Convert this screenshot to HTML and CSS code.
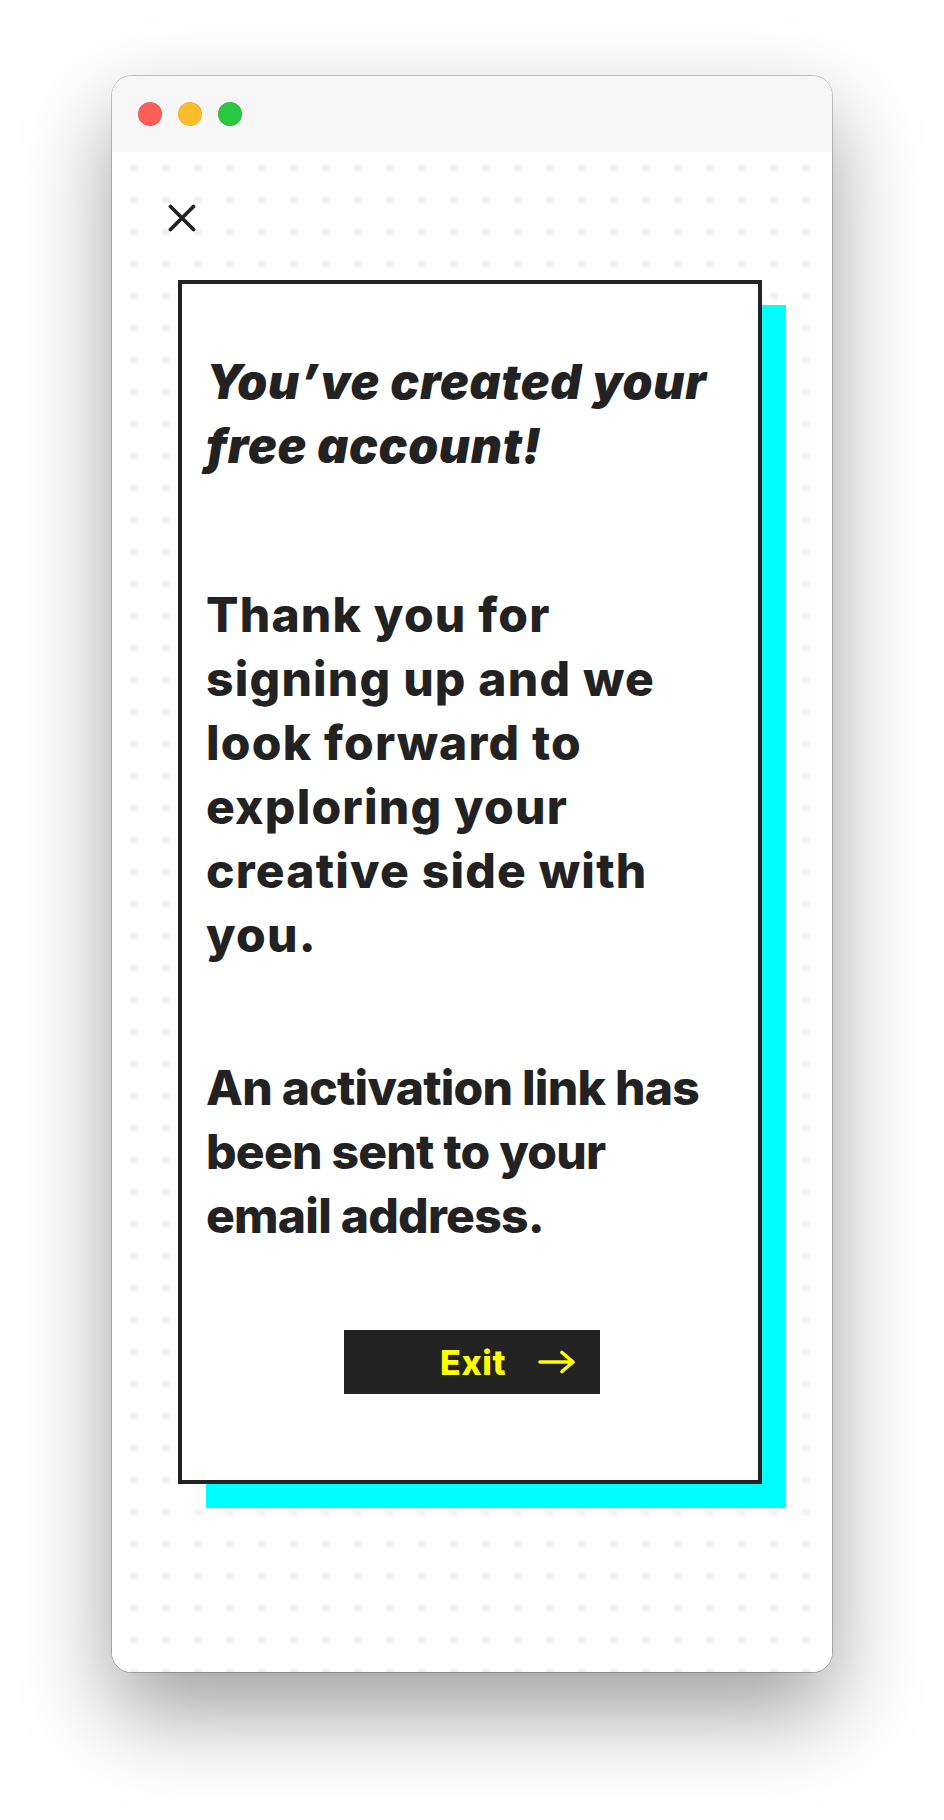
FILE: index.html
```html
<!DOCTYPE html>
<html lang="en">
<head>
<meta charset="utf-8">
<title>Account created</title>
<link rel="stylesheet" href="styles.css">
</head>
<body>
<div class="window">
  <div class="titlebar">
    <span class="light red"></span>
    <span class="light yellow"></span>
    <span class="light green"></span>
  </div>
  <div class="content">
    <button class="close" aria-label="Close">
      <svg viewBox="0 0 28 28" width="28" height="28"><path d="M2.5 2.5 L25.5 25.5 M25.5 2.5 L2.5 25.5"/></svg>
    </button>
    <section class="card">
      <h1 class="title">You’ve created your<br>free account!</h1>
      <p class="text first">Thank you for<br>signing up and we<br>look forward to<br>exploring your<br>creative side with<br>you.</p>
      <p class="text second">An activation link has<br>been sent to your<br>email address.</p>
      <a class="exit" href="#">
        <span>Exit</span>
        <svg viewBox="0 0 37 26" width="37" height="26"><path d="M2 13 H35 M24 3.5 L35 13 L24 22.5"/></svg>
      </a>
    </section>
  </div>
</div>
</body>
</html>
```
FILE: styles.css
```css
* { box-sizing: border-box; }
html, body { margin: 0; background: #fff; }
body { width: 944px; height: 1820px; overflow: hidden; padding: 76px 0 0 112px; font-family: Inter, "Noto Sans", sans-serif; color: #222; }
.window {
  width: 720px; height: 1596px; border-radius: 20px; overflow: hidden; background: #fff;
  display: flex; flex-direction: column;
  box-shadow: 0 0 0 1px rgba(0,0,0,.22), 0 40px 90px rgba(0,0,0,.38);
}
.titlebar { height: 76px; flex: none; background: #f7f7f7; display: flex; align-items: center; gap: 16px; padding: 0 0 0 26px; }
.light { width: 24px; height: 24px; border-radius: 50%; border: 1px solid rgba(0,0,0,.07); }
.red { background: #ff5f57; }
.yellow { background: #febc2e; }
.green { background: #28c840; }
.content {
  position: relative; z-index: 0;
  flex: 1; display: flex; flex-direction: column; padding: 52px 0 0 66px;
  background-color: #fff;
  background-image: radial-gradient(circle at center, #f3f3f3 0, #f3f3f3 3px, rgba(243,243,243,0) 4.5px);
  background-size: 32px 32px;
  background-position: 6px 0;
}
.close { align-self: flex-start; width: 28px; height: 28px; margin: 0 0 48px -10px; padding: 0; border: 0; background: none; display: block; }
.close svg { display: block; fill: none; stroke: #222; stroke-width: 3.8; stroke-linecap: round; }
.card {
  position: relative; width: 584px; height: 1204px; background: #fff; border: 4px solid #222;
  padding: 66px 24px 0; display: flex; flex-direction: column;
}
.card::before {
  content: ""; position: absolute; z-index: -1; left: 24px; right: -28px; top: 21px; bottom: -28px; background: #0ff;
}
.title { margin: 0; font-size: 48px; line-height: 64px; font-weight: 900; font-style: italic; letter-spacing: 0.7px; }
.text { margin: 0; font-size: 48px; line-height: 64px; font-weight: 800; }
.first { margin-top: 105px; letter-spacing: 1.2px; }
.second { margin-top: 89px; letter-spacing: -0.75px; }
.exit {
  align-self: flex-start; margin: 82px 0 0 138px; width: 256px; height: 64px; background: #222; color: #ff0;
  display: flex; align-items: center; justify-content: flex-end; gap: 32px; padding-right: 25px;
  font-size: 34px; font-weight: 800; letter-spacing: 0.6px; text-decoration: none;
}
.exit svg { display: block; fill: none; stroke: #ff0; stroke-width: 3.6; stroke-linecap: round; stroke-linejoin: round; }
```
